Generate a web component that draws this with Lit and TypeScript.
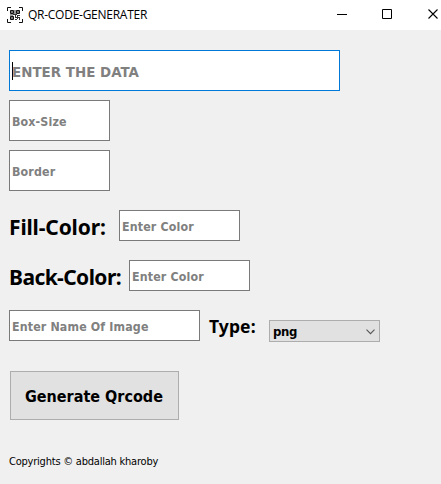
import { LitElement, html, css } from "lit";
import { customElement } from "lit/decorators.js";

@customElement("app-root")
export class AppRoot extends LitElement {
  static styles = css`
    :host {
      display: flex;
      flex-direction: column;
      height: 484px;
      background: #f0f0f0;
      color: #000;
      font-family: "DejaVu Sans", sans-serif;
      font-stretch: condensed;
      overflow: hidden;
      white-space: nowrap;
    }
    * { box-sizing: border-box; }
    header {
      display: flex;
      align-items: center;
      height: 30px;
      flex: none;
      background: #fff;
      padding-left: 7px;
    }
    .title {
      flex: 1;
      margin-left: 5px;
      font: 12px/29px "Open Sans", sans-serif;
      letter-spacing: -0.26px;
      height: 30px;
    }
    .controls { display: block; flex: none; }
    svg { display: block; }
    main { display: flex; flex-direction: column; padding: 20px 0 0 9px; }
    .row { display: flex; height: 41px; margin-bottom: 9px; align-items: flex-start; }
    .row.short { height: 31px; margin-bottom: 19px; }
    .row.first { margin-top: 10px; }
    .field {
      display: flex;
      align-items: center;
      height: 100%;
      background: #fff;
      border: 1px solid #7a7a7a;
      padding: 2px 0 0 2px;
      color: #808080;
      font-weight: bold;
      font-size: 12.3px;
      letter-spacing: 0.15px;
    }
    .data { width: 331px; border-color: #0078d7; font-size: 14.9px; letter-spacing: 0.03px; padding-top: 1px; }
    .caret { width: 1px; height: 18px; background: #000; margin-top: -1px; }
    .data span { margin: 2px 0 0 -1px; }
    .small { width: 101px; }
    .color { width: 121px; }
    .name { width: 191px; }
    .label { font: bold 21px/34px "Noto Sans", sans-serif; }
    .fill { width: 110px; letter-spacing: -0.15px; }
    .back { width: 120px; letter-spacing: -0.58px; }
    .type { width: 69px; padding-left: 9px; font-size: 17.5px; line-height: 33px; letter-spacing: 0.1px; }
    .select {
      display: flex;
      align-items: center;
      justify-content: space-between;
      width: 111px;
      height: 22px;
      margin-top: 10px;
      padding: 1px 4px 0 3px;
      background: #e1e1e1;
      border: 1px solid #adadad;
      font-size: 13px;
      letter-spacing: -0.3px;
      font-weight: bold;
    }
    .button {
      display: flex;
      align-items: center;
      width: 169px;
      height: 49px;
      margin: 11px 0 0 1px;
      padding: 1px 0 0 14px;
      background: #e1e1e1;
      border: 1px solid #adadad;
      font-size: 16px;
      font-weight: bold;
    }
    .copy { margin-top: 34px; font-size: 11px; line-height: 15px; letter-spacing: -0.22px; }
  `;

  render() {
    return html`
      <header>
        ${this.logo()}
        <div class="title">QR-CODE-GENERATER</div>
        ${this.controls()}
      </header>
      <main>
        <div class="row"><div class="field data"><i class="caret"></i><span>ENTER THE DATA</span></div></div>
        <div class="row"><div class="field small"><span>Box-Size</span></div></div>
        <div class="row"><div class="field small"><span>Border</span></div></div>
        <div class="row short first">
          <div class="label fill">Fill-Color:</div>
          <div class="field color"><span>Enter Color</span></div>
        </div>
        <div class="row short">
          <div class="label back">Back-Color:</div>
          <div class="field color"><span>Enter Color</span></div>
        </div>
        <div class="row short">
          <div class="field name"><span>Enter Name Of Image</span></div>
          <div class="label type">Type:</div>
          <div class="select">
            <span>png</span>
            <svg width="9" height="6" viewBox="0 0 9 6"><path d="M.5 .7l4 4 4-4" fill="none" stroke="#555" stroke-width="1.1"/></svg>
          </div>
        </div>
        <div class="button"><span>Generate Qrcode</span></div>
        <div class="copy">Copyrights © abdallah kharoby</div>
      </main>
    `;
  }

  private logo() {
    return html`<svg width="16" height="16" viewBox="0 0 16 16" fill="none" stroke="#111">
      <path d="M.5 4V.5H4M12 .5h3.5V4M15.5 12v3.5H12M4 15.5H.5V12"/>
      <path d="M3.5 3.5h3v3h-3zM9.5 3.5h3v3h-3zM3.5 9.5h3v3h-3z" fill="#777"/>
      <path d="M8 3v4M6 7.5h4M3 8h3M10 8.5h3M8.5 8v3M9 10.5h3M8 12.5h2M12.5 10v3M10.5 9v3" stroke="#333"/>
    </svg>`;
  }

  private controls() {
    return html`<svg class="controls" width="106" height="30" viewBox="335 0 106 30" fill="none" stroke="#000">
      <path d="M337 14.5h10M382.5 9.5h9v9h-9z"/>
      <path d="M428.5 9.5l9 9M437.5 9.5l-9 9" stroke-width="1.1"/>
    </svg>`;
  }
}
